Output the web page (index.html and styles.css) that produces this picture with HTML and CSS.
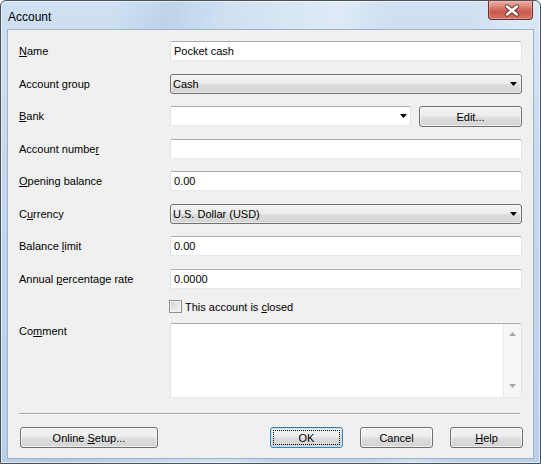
FILE: index.html
```html
<!DOCTYPE html>
<html>
<head>
<meta charset="utf-8">
<title>Account</title>
<link rel="stylesheet" href="styles.css">
</head>
<body>
<div class="window">
  <div class="titlebar">
    <span class="title">Account</span>
    <div class="close">
      <svg width="45" height="19" viewBox="0 0 45 19">
        <path d="M19.5 5.5 L29.5 13.5 M29.5 5.5 L19.5 13.5" stroke="#4a2420" stroke-width="4.6" stroke-linecap="round" fill="none" opacity="0.75"/>
        <path d="M19.5 5.5 L29.5 13.5 M29.5 5.5 L19.5 13.5" stroke="#ffffff" stroke-width="2.6" stroke-linecap="round" fill="none"/>
      </svg>
    </div>
  </div>
  <div class="client">
    <div class="form">
      <div class="lbl"><span><u>N</u>ame</span></div>
      <div class="textbox">Pocket cash</div>

      <div class="lbl"><span>Account <u>g</u>roup</span></div>
      <div class="combo"><span>Cash</span><svg class="arrow" width="7" height="4" viewBox="0 0 7 4"><polygon points="0,0 7,0 3.5,4" fill="#000"/></svg></div>

      <div class="lbl"><span><u>B</u>ank</span></div>
      <div class="bankrow">
        <div class="editcombo"><span></span><svg class="arrow" width="7" height="4" viewBox="0 0 7 4"><polygon points="0,0 7,0 3.5,4" fill="#000"/></svg></div>
        <div class="btn edit"><span>Edit...</span></div>
      </div>

      <div class="lbl"><span>Account numbe<u>r</u></span></div>
      <div class="textbox"></div>

      <div class="lbl"><span><u>O</u>pening balance</span></div>
      <div class="textbox">0.00</div>

      <div class="lbl"><span>C<u>u</u>rrency</span></div>
      <div class="combo"><span>U.S. Dollar (USD)</span><svg class="arrow" width="7" height="4" viewBox="0 0 7 4"><polygon points="0,0 7,0 3.5,4" fill="#000"/></svg></div>

      <div class="lbl"><span>Balance <u>l</u>imit</span></div>
      <div class="textbox">0.00</div>

      <div class="lbl"><span>Annual <u>p</u>ercentage rate</span></div>
      <div class="textbox">0.0000</div>
    </div>

    <div class="checkrow">
      <span class="checkbox"></span>
      <span class="checklabel">This account is <u>c</u>losed</span>
    </div>

    <div class="commentrow">
      <div class="lbl top"><span>Co<u>m</u>ment</span></div>
      <div class="textarea">
        <div class="tacontent"></div>
        <div class="scrollbar">
          <svg width="7" height="4" viewBox="0 0 7 4"><polygon points="3.5,0 7,4 0,4" fill="#a8a8a8"/></svg>
          <svg width="7" height="4" viewBox="0 0 7 4"><polygon points="0,0 7,0 3.5,4" fill="#a8a8a8"/></svg>
        </div>
      </div>
    </div>

    <div class="separator"></div>

    <div class="buttons">
      <div class="btn online"><span>Online <u>S</u>etup...</span></div>
      <div class="spacer"></div>
      <div class="btn std default"><span class="focus">OK</span></div>
      <div class="btn std"><span>Cancel</span></div>
      <div class="btn std"><span><u>H</u>elp</span></div>
    </div>
  </div>
</div>
</body>
</html>
```
FILE: styles.css
```css
html, body {
  margin: 0;
  padding: 0;
  background: #ffffff;
}

body {
  font-family: "Liberation Sans", Arial, sans-serif;
  font-size: 11px;
  color: #000;
}

u {
  text-decoration: underline;
  text-underline-offset: 1px;
}

.window {
  width: 541px;
  height: 464px;
  box-sizing: border-box;
  border: 1px solid #4c5159;
  border-radius: 6px 6px 0 0;
  padding: 0 6px 4px 6px;
  display: flex;
  flex-direction: column;
  background:
    linear-gradient(104deg,
      rgba(255,255,255,0) 0%,
      rgba(255,255,255,0) 18%,
      rgba(160,185,215,0.35) 26%,
      rgba(255,255,255,0) 34%,
      rgba(255,255,255,0.35) 52%,
      rgba(255,255,255,0) 60%,
      rgba(255,255,255,0) 72%,
      rgba(255,255,255,0.3) 80%,
      rgba(255,255,255,0) 88%),
    linear-gradient(180deg, #cfe0f2 0%, #c3d8ee 40%, #b9d0e9 100%);
  box-shadow: inset 0 0 0 1px rgba(255,255,255,0.55);
}

.titlebar {
  height: 28px;
  flex: none;
  display: flex;
  justify-content: space-between;
  align-items: flex-start;
}

.title {
  font-size: 12px;
  line-height: 14px;
  padding: 9px 0 0 1px;
  color: #000;
}

.close {
  width: 45px;
  height: 19px;
  margin-right: 1px;
  box-sizing: border-box;
  border: 1px solid #6b2f29;
  border-top: none;
  border-radius: 0 0 4px 4px;
  background: linear-gradient(180deg, #e9b1a6 0%, #d98073 35%, #c9594b 60%, #d47566 100%);
  box-shadow: inset 0 0 0 1px rgba(255,210,200,0.35);
  display: flex;
}

.close svg {
  display: block;
  margin-left: -1px;
}

.client {
  flex: 1;
  background: #f0f0f0;
  border: 1px solid #9fb1c6;
  padding: 11px 10px 0 11px;
  display: flex;
  flex-direction: column;
}

.form {
  display: grid;
  grid-template-columns: 151px 352px;
  grid-auto-rows: 20px;
  row-gap: 12.5px;
}

.lbl {
  display: flex;
  align-items: center;
  white-space: nowrap;
}

.lbl.top {
  align-items: flex-start;
  padding-top: 2px;
}

.textbox {
  box-sizing: border-box;
  height: 20px;
  background: #fff;
  border: 1px solid #e2e3ea;
  border-top-color: #abadb3;
  border-bottom-color: #e3e9ef;
  border-radius: 2px;
  padding: 0 3px;
  display: flex;
  align-items: center;
}

.combo {
  box-sizing: border-box;
  height: 20px;
  border: 1px solid #707070;
  border-radius: 3px;
  background: linear-gradient(180deg, #f3f3f3 0%, #ececec 48%, #dedede 52%, #d3d3d3 100%);
  box-shadow: inset 0 0 0 1px rgba(255,255,255,0.55);
  padding: 0 4px 0 2px;
  display: flex;
  justify-content: space-between;
  align-items: center;
}

.arrow {
  display: block;
  flex: none;
}

.bankrow {
  display: flex;
  gap: 8px;
}

.editcombo {
  box-sizing: border-box;
  width: 241px;
  height: 20px;
  background: #fff;
  border: 1px solid #e2e3ea;
  border-top-color: #abadb3;
  border-bottom-color: #e3e9ef;
  border-radius: 2px;
  padding: 0 3px 0 3px;
  display: flex;
  justify-content: space-between;
  align-items: center;
}

.btn {
  box-sizing: border-box;
  height: 21px;
  border: 1px solid #707070;
  border-radius: 3px;
  background: linear-gradient(180deg, #f3f3f3 0%, #ececec 48%, #dedede 52%, #d3d3d3 100%);
  box-shadow: inset 0 0 0 1px rgba(255,255,255,0.6);
  display: flex;
  justify-content: center;
  align-items: center;
  white-space: nowrap;
}

.btn.edit {
  width: 103px;
}

.checkrow {
  margin-top: 11.5px;
  padding-left: 151px;
  height: 13px;
  display: flex;
  align-items: center;
  gap: 3px;
}

.checkbox {
  width: 13px;
  height: 13px;
  box-sizing: border-box;
  border: 1px solid #8e8f8f;
  background: linear-gradient(135deg, #cfcfcf 0%, #e8e8e8 60%, #f7f7f7 100%);
  box-shadow: inset 0 0 0 1px #f4f4f4;
  margin-left: -1px;
  flex: none;
}

.checklabel {
  white-space: nowrap;
}

.commentrow {
  margin-top: 10px;
  display: grid;
  grid-template-columns: 151px 352px;
}

.textarea {
  box-sizing: border-box;
  height: 75px;
  background: #fff;
  border: 1px solid #e2e3ea;
  border-top-color: #abadb3;
  border-bottom-color: #e3e9ef;
  border-radius: 2px;
  display: flex;
}

.tacontent {
  flex: 1;
}

.scrollbar {
  width: 17px;
  background: #f6f6f6;
  border-left: 1px dotted #e0e0e0;
  display: flex;
  flex-direction: column;
  justify-content: space-between;
  align-items: center;
  padding: 8px 0 9px 0;
}

.scrollbar svg {
  display: block;
}

.separator {
  margin-top: 15px;
  margin-right: 3px;
  height: 0;
  border-top: 1px solid #a0a0a0;
  border-bottom: 1px solid #ffffff;
}

.buttons {
  margin-top: 12px;
  display: flex;
  gap: 17px;
}

.btn.online {
  width: 138px;
  margin-left: 1px;
}

.spacer {
  flex: 1;
}

.btn.std {
  width: 73px;
}

.btn.default {
  border-color: #3c7fb1;
  box-shadow: inset 0 0 0 1px #bfe4f9;
  padding: 2px;
  align-items: stretch;
}

.focus {
  flex: 1;
  border: 1px dotted #000;
  display: flex;
  justify-content: center;
  align-items: center;
}
```
